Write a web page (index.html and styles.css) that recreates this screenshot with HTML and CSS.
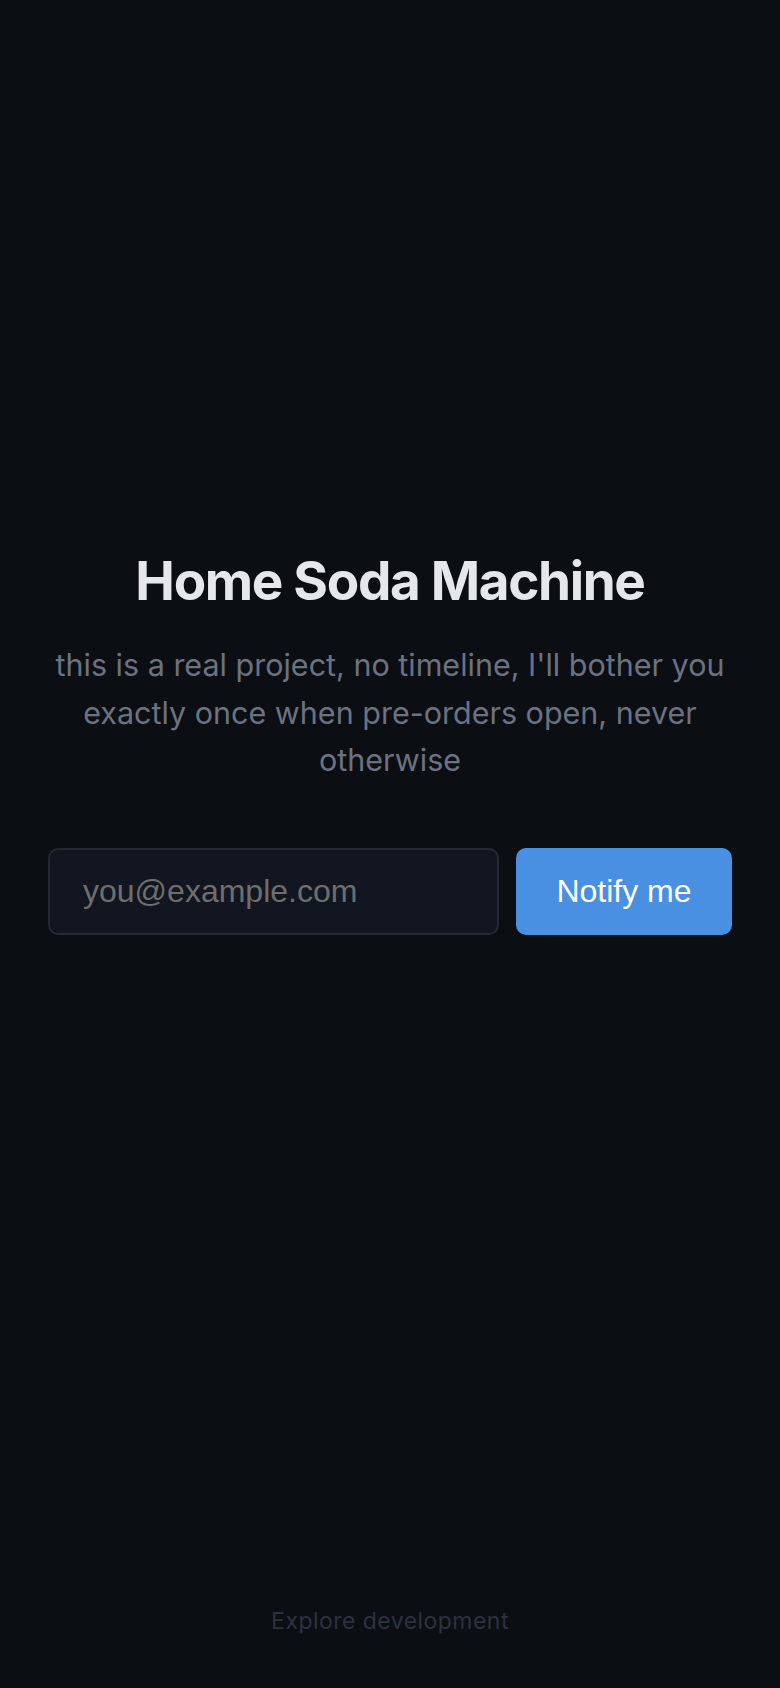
FILE: index.html
```html
<!DOCTYPE html>
<html lang="en">
<head>
  <meta charset="UTF-8">
  <meta name="viewport" content="width=device-width, initial-scale=1.0">
  <title>Home Soda Machine</title>
  <link rel="stylesheet" href="styles.css">
</head>
<body>
  <main class="hero">
    <h1 class="hero-title">Home Soda Machine</h1>
    <p class="hero-text">this is a real project, no timeline, I'll bother you exactly once when pre-orders open, never otherwise</p>

    <!-- Signup form -->
    <form class="signup" onsubmit="return false;">
      <input class="signup-input" type="email" placeholder="you@example.com">
      <button class="signup-button" type="submit">Notify me</button>
    </form>
  </main>

  <footer class="footer">
    <a class="footer-link" href="#">Explore development</a>
  </footer>
</body>
</html>
```

FILE: styles.css
```css
html, body {
  height: 100%;
}

body {
  margin: 0;
  padding: 0;
  display: flex;
  flex-direction: column;
  background-color: #0b0e13;
  color: #e5e7eb;
  font-family: Inter, 'Noto Sans', sans-serif;
}

.hero {
  flex: 1;
  display: flex;
  flex-direction: column;
  justify-content: center;
  align-items: center;
  padding: 0 48px 65px;
  text-align: center;
}

.hero-title {
  margin: 0;
  font-size: 53px;
  font-weight: 700;
  letter-spacing: -0.025em;
  line-height: 1.2;
  color: #e5e7eb;
}

.hero-text {
  margin: 27px 0 0;
  font-size: 30.5px;
  line-height: 47.5px;
  color: #6b7280;
}

/* Signup form */
.signup {
  display: flex;
  gap: 17px;
  width: 100%;
  margin-top: 64px;
}

.signup-input {
  flex: 1;
  min-width: 0;
  height: 87px;
  box-sizing: border-box;
  padding: 0 33px;
  background-color: #111620;
  border: 2px solid #232833;
  border-radius: 10px;
  color: #e5e7eb;
  font-family: 'Liberation Sans', Arial, sans-serif;
  font-size: 32px;
  outline: none;
}

.signup-input::placeholder {
  color: #6e6e6e;
}

.signup-button {
  width: 216px;
  height: 87px;
  background-color: #4a90e2;
  border: none;
  border-radius: 10px;
  color: #fff;
  font-family: 'Liberation Sans', Arial, sans-serif;
  font-size: 32px;
  cursor: pointer;
}

.footer {
  padding: 50px 0 46px;
  text-align: center;
}

.footer-link {
  color: #2c3240;
  font-size: 23px;
  line-height: 42px;
  letter-spacing: 0.02em;
  text-decoration: none;
}
```
